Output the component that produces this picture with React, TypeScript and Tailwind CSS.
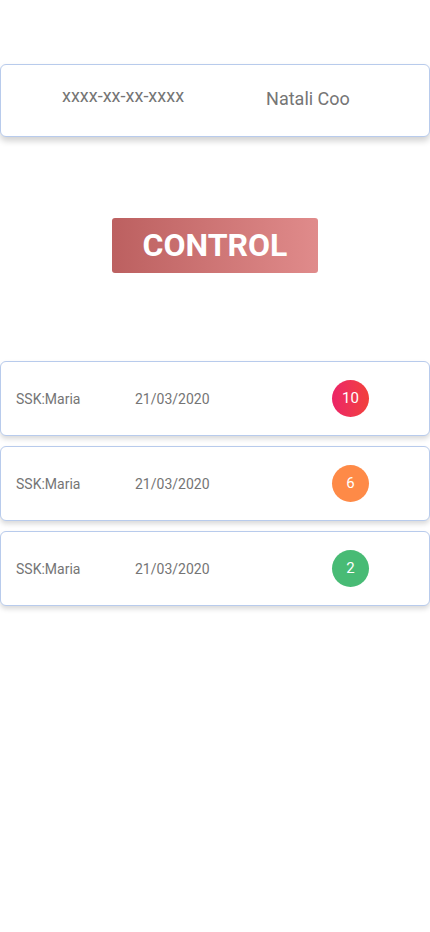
export default function App() {
  const rows = [
    { name: "SSK:Maria", date: "21/03/2020", count: "10", color: "bg-gradient-to-r from-[#ec2467] to-[#f2403a]" },
    { name: "SSK:Maria", date: "21/03/2020", count: "6", color: "bg-[#fe8a47]" },
    { name: "SSK:Maria", date: "21/03/2020", count: "2", color: "bg-[#48bb75]" },
  ];

  return (
    <div className="min-h-[932px] w-full bg-white pt-16 font-['Roboto',sans-serif]">
      <div className="flex h-[73px] items-center rounded-md border border-[#b8cbec] bg-white shadow-[0_4px_6px_rgba(0,0,0,0.18)]">
        <span className="ml-[61px] -mt-[10px] text-[18px] text-[#757575]">xxxx-xx-xx-xxxx</span>
        <span className="ml-[82px] -mt-[4px] text-[18px] text-[#757575]">Natali Coo</span>
      </div>

      <div className="mt-[81px] flex justify-center">
        <button className="h-[55px] w-[206px] rounded-[3px] bg-gradient-to-r from-[#bc6060] to-[#e08b8b] pb-[2px] text-[32px] font-bold text-white">
          CONTROL
        </button>
      </div>

      <div className="mt-[88px] flex flex-col gap-[10px]">
        {rows.map((r, i) => (
          <div
            key={i}
            className="flex h-[75px] items-center rounded-md border border-[#b8cbec] bg-white shadow-[0_3px_5px_rgba(0,0,0,0.15)]"
          >
            <span className="ml-[15px] mt-[2px] w-[119px] text-[14px] text-[#757575]">{r.name}</span>
            <span className="mt-[2px] w-[197px] text-[14px] text-[#757575]">{r.date}</span>
            <span className={`flex h-[37px] w-[37px] items-center justify-center rounded-full text-[15px] text-white ${r.color}`}>
              {r.count}
            </span>
          </div>
        ))}
      </div>
    </div>
  );
}
